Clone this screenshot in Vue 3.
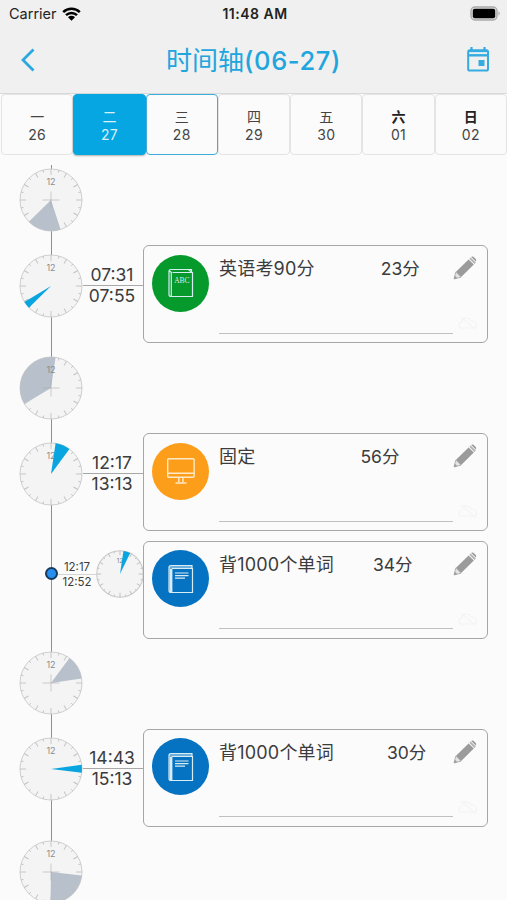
<script setup>
import { ref } from "vue";

const selectedDay = ref("27");
const today = "28";

const days = ref([
  { name: "一", date: "26" },
  { name: "二", date: "27" },
  { name: "三", date: "28" },
  { name: "四", date: "29" },
  { name: "五", date: "30" },
  { name: "六", date: "01", weekend: true },
  { name: "日", date: "02", weekend: true },
]);

// from / to are degrees on a 12 hour dial, gap is the space before the minutes
const rows = ref([
  { id: 1, type: "free", from: 162, to: 225.5 },
  {
    id: 2,
    type: "task",
    start: "07:31",
    end: "07:55",
    from: 225.5,
    to: 239,
    title: "英语考90分",
    minutes: 23,
    icon: "abc",
    color: "#059a2b",
    gap: 66,
  },
  { id: 3, type: "free", from: 239, to: 368.5 },
  {
    id: 4,
    type: "task",
    start: "12:17",
    end: "13:13",
    from: 8.5,
    to: 36.5,
    title: "固定",
    minutes: 56,
    icon: "screen",
    color: "#fd9e1b",
    gap: 105,
  },
  {
    id: 5,
    type: "sub",
    start: "12:17",
    end: "12:52",
    from: 8.5,
    to: 26,
    title: "背1000个单词",
    minutes: 34,
    icon: "book",
    color: "#0573c2",
    gap: 39,
  },
  { id: 6, type: "free", from: 36.5, to: 81.5 },
  {
    id: 7,
    type: "task",
    start: "14:43",
    end: "15:13",
    from: 82,
    to: 97,
    title: "背1000个单词",
    minutes: 30,
    icon: "book",
    color: "#0573c2",
    gap: 53,
  },
  { id: 8, type: "free", from: 96.5, to: 181 },
]);

const point = (deg) => {
  const rad = (deg * Math.PI) / 180;
  return `${(31 * Math.sin(rad)).toFixed(2)} ${(-31 * Math.cos(rad)).toFixed(2)}`;
};

const sector = (row) => {
  const large = row.to - row.from > 180 ? 1 : 0;
  return `M0 0L${point(row.from)}A31 31 0 ${large} 1 ${point(row.to)}Z`;
};

const tickLength = (n) => (n % 6 === 0 ? 6 : n % 2 === 0 ? 5 : 2.5);
</script>

<template>
  <div class="page">
    <div class="status-bar">
      <div class="carrier">
        <span>Carrier</span>
        <svg width="19" height="14" viewBox="0 0 19 14">
          <path
            d="M1.2 5.2A12 12 0 0 1 17.8 5.2M4 8.2A8 8 0 0 1 15 8.2"
            fill="none"
            stroke="#000"
            stroke-width="2.5"
          />
          <path d="M6 10.3A5 5 0 0 1 13 10.3L9.5 13.8Z" fill="#000" />
        </svg>
      </div>
      <div class="clock-text">11:48 AM</div>
      <div class="battery">
        <svg width="31" height="16" viewBox="0 0 31 16">
          <rect x="1" y="1" width="26" height="13" rx="4" fill="#dcdcdc" stroke="#a9a9a9" stroke-width="1.4" />
          <rect x="2.8" y="2.8" width="22.4" height="9.4" rx="2" fill="#000" />
          <path d="M28.5 5.3Q31 7.5 28.5 9.7Z" fill="#a9a9a9" />
        </svg>
      </div>
    </div>

    <div class="nav-bar">
      <svg class="back" width="16" height="24" viewBox="0 0 16 24">
        <path d="M13.5 1.5L3 12L13.5 22.5" fill="none" stroke="#2ba8de" stroke-width="2.8" />
      </svg>
      <h1>时间轴<span>(06-27)</span></h1>
      <svg class="calendar" width="24" height="26" viewBox="0 0 24 26">
        <path d="M5.5 0V4M18.5 0V4" stroke="#35abdf" stroke-width="2.2" />
        <rect x="2.2" y="3.2" width="19.8" height="20.3" rx="1.6" fill="none" stroke="#35abdf" stroke-width="2" />
        <path d="M2 3H22V9.5H2Z" fill="#35abdf" />
        <path d="M3.2 6.1H21" stroke="#e3f0f5" stroke-width="2" />
        <rect x="12.5" y="13" width="6" height="6" fill="#35abdf" />
      </svg>
    </div>

    <div class="week">
      <button
        v-for="day in days"
        :key="day.date"
        class="day"
        :class="{
          active: selectedDay === day.date,
          today: today === day.date,
          weekend: day.weekend,
        }"
        @click="selectedDay = day.date"
      >
        <span class="day-name">{{ day.name }}</span>
        <span class="day-date">{{ day.date }}</span>
      </button>
    </div>

    <div class="timeline">
      <div v-for="row in rows" :key="row.id" class="row" :class="row.type">
        <div v-if="row.type === 'sub'" class="dot"></div>
        <svg v-else class="dial" viewBox="-32 -32 64 64">
          <circle r="31" fill="#f4f4f4" stroke="#cfcfcf" />
          <path v-if="row.type === 'free'" :d="sector(row)" fill="#b7c0cb" />
          <line
            v-for="n in 24"
            :key="n"
            y1="-31"
            :y2="-31 + tickLength(n)"
            :transform="`rotate(${n * 15})`"
            stroke="#c2c2c2"
            stroke-width="0.9"
          />
          <path v-if="row.type === 'free'" d="M-8.5 0H8.5M0 -8.5V8.5" stroke="#aaa" stroke-opacity="0.55" />
          <text y="-15.3" text-anchor="middle">12</text>
          <path v-if="row.type !== 'free'" :d="sector(row)" fill="#08a5e1" />
        </svg>

        <div v-if="row.type !== 'free'" class="times">
          <span>{{ row.start }}</span>
          <span>{{ row.end }}</span>
        </div>

        <svg v-if="row.type === 'sub'" class="dial small" viewBox="-32 -32 64 64">
          <circle r="31" fill="#f4f4f4" stroke="#c8c8c8" stroke-width="1.4" />
          <line
            v-for="n in 24"
            :key="n"
            y1="-31"
            :y2="-31 + tickLength(n)"
            :transform="`rotate(${n * 15})`"
            stroke="#b9b9b9"
            stroke-width="1.1"
          />
          <text y="-15.3" text-anchor="middle">12</text>
          <path :d="sector(row)" fill="#08a5e1" />
        </svg>

        <div v-if="row.type !== 'free'" class="card">
          <div class="badge" :style="{ backgroundColor: row.color }">
            <svg
              v-if="row.icon === 'screen'"
              width="30"
              height="28"
              viewBox="0 0 30 28"
              fill="none"
              stroke="#ffe9c9"
              stroke-width="1.4"
            >
              <rect x="1.7" y="1.7" width="26.4" height="18.6" rx="1" />
              <path d="M2 16.3H28M12.8 20.5V25M17 20.5V25M9.5 26H20.5" />
            </svg>
            <svg v-else width="26" height="30" viewBox="0 0 26 30" fill="none" stroke="#d8ecf4" stroke-width="1.2">
              <path
                v-if="row.icon === 'abc'"
                d="M4.5 4.5H24.5V28.5H3Q1 28.5 1 26.5V3Q1 1.5 3 1.5H23.5V4.5M3.3 4V28M1.5 3L3.5 4.5M20.5 1.5L24 4.5"
              />
              <g v-else>
                <path d="M4 4.5H24.5V28.5H3Q1 28.5 1 26.5V3Q1 1.5 3 1.5H24V4.5M1.5 3H24" />
                <path d="M3 4.5V28" stroke-width="2.8" />
                <path d="M7 9H20.5M7 11.6H20.5M7 14.2H17" />
              </g>
              <text v-if="row.icon === 'abc'" x="13.9" y="14.7" text-anchor="middle">ABC</text>
            </svg>
          </div>
          <div class="content">
            <div class="title-line">
              <span>{{ row.title }}</span>
              <span class="minutes" :style="{ marginLeft: row.gap + 'px' }">{{ row.minutes }}分</span>
            </div>
          </div>
          <div class="actions">
            <svg width="24" height="24" viewBox="0 0 24 24">
              <path d="M1 23L2.8 16L8 21.2Z" fill="#e4e4e4" stroke="#a5a5a5" stroke-width="0.8" />
              <path d="M1 23L1.9 19.8L4.2 22.1Z" fill="#999" />
              <path d="M3 15.8L15.6 3.4L20.8 8.6L8.2 21Z" fill="#9b9b9b" />
              <path d="M16.3 2.8L17.6 1.5L22.8 6.6L21.4 8Z" fill="#b3b3b3" />
              <path d="M18.2 1L19 0.6Q20 0.2 21 1.2L22.7 2.9Q23.7 4 23 5.1L22.8 5.6Z" fill="#9b9b9b" />
            </svg>
            <svg class="cloud" width="20" height="16" viewBox="0 0 20 16" fill="none" stroke="#f4f4f4" stroke-width="1.2">
              <path d="M4 13Q1 13 1 10T4 7Q5 2 9 3Q12 3 13 6Q18 6 18.5 10Q18.5 13 15.5 13ZM3 2L18 15" />
            </svg>
          </div>
        </div>
      </div>
    </div>
  </div>
</template>

<style>
body {
  margin: 0;
  overflow: hidden;
}
</style>

<style scoped>
.page {
  width: 507px;
  height: 900px;
  overflow: hidden;
  background: #fbfbfb;
  color: #3c3c3c;
  font-family: Inter, "Noto Sans CJK SC", sans-serif;
}

.status-bar {
  display: grid;
  grid-template-columns: 1fr auto 1fr;
  align-items: center;
  height: 27px;
  padding: 0 6px 0 9px;
  background: #f0f0f0;
  color: #222;
  font-size: 14.5px;
}

.carrier {
  display: flex;
  align-items: center;
  gap: 5px;
}

.clock-text {
  font-weight: 600;
  font-size: 14px;
  letter-spacing: 0.5px;
}

.battery {
  display: flex;
  justify-content: flex-end;
}

.nav-bar {
  display: flex;
  justify-content: space-between;
  align-items: center;
  box-sizing: border-box;
  height: 67px;
  padding: 0 17px 0 20px;
  border-bottom: 1px solid #d9d9d9;
  background: #f0f0f0;
}

.back {
  margin-bottom: 1px;
}

h1 {
  margin: 1px 0 0 5px;
  color: #21a5dd;
  font-size: 26px;
  font-weight: 400;
  line-height: 36px;
}

h1 span {
  font-weight: 500;
  font-size: 25.5px;
  letter-spacing: 0.6px;
}

.calendar {
  margin-bottom: 1px;
}

.week {
  display: flex;
  height: 61px;
  padding-left: 1px;
}

.day {
  flex: 1;
  display: flex;
  flex-direction: column;
  align-items: center;
  justify-content: center;
  padding: 2px 0 0;
  border: 1.5px solid #e4e4e4;
  border-radius: 4px;
  background: #fbfbfb;
  color: #444;
  font-family: inherit;
  font-size: 14px;
  line-height: 18px;
}

.day-date {
  letter-spacing: 0.3px;
}

.day.active {
  border-color: #06a6e2;
  background: #06a6e2;
  color: #d9f1fb;
  box-shadow: 0 1px 2px rgba(0, 0, 0, 0.3);
}

.day.today {
  border-color: #3fabd8;
}

.day.weekend .day-name {
  font-weight: 700;
  color: #222;
}

.timeline {
  margin-top: 9.5px;
  background: linear-gradient(#909090, #909090) 51px 0 / 1px 100% no-repeat;
}

.row {
  display: flex;
  align-items: flex-start;
  height: 107.6px;
  padding-left: 19px;
}

.row.free {
  height: 80.5px;
}

.dial {
  flex: none;
  width: 64px;
  height: 64px;
  margin-top: 8.5px;
}

.free .dial {
  margin-top: 3.2px;
}

.dial.small {
  width: 48px;
  height: 48px;
  margin-top: 9px;
}

.dial text {
  fill: #8b8b8b;
  font-size: 9px;
}

.times {
  display: flex;
  flex-direction: column;
  width: 60px;
  margin-top: 19.5px;
  text-align: center;
  text-indent: -2px;
  font-size: 17.5px;
  line-height: 20px;
}

.times span:first-child {
  border-bottom: 1px solid #a8a8a8;
}

.dot {
  box-sizing: border-box;
  flex: none;
  width: 13px;
  height: 13px;
  margin: 26px 0 0 26px;
  border: 2px solid #173a5c;
  border-radius: 50%;
  background: #2590ef;
}

.sub .times {
  width: 38px;
  margin-top: 19px;
  text-indent: 0;
  font-size: 11.5px;
  line-height: 14px;
}

.sub .times span:first-child {
  border-color: #d4d4d4;
}

.card {
  display: flex;
  box-sizing: border-box;
  flex: none;
  width: 345px;
  height: 98px;
  border: 1.5px solid #a6a6a6;
  border-radius: 6px;
  background: #fbfbfb;
}

.sub .card {
  margin-left: -1px;
}

.badge {
  display: flex;
  flex: none;
  align-items: center;
  justify-content: center;
  width: 57px;
  height: 57px;
  margin: 8.5px 10px 0 8px;
  border-radius: 50%;
}

.badge text {
  fill: #d8ecf4;
  stroke: none;
  font-family: "Liberation Serif", serif;
  font-size: 7.5px;
}

.content {
  box-sizing: border-box;
  flex: none;
  width: 234px;
  height: 87.5px;
  padding-top: 10px;
  border-bottom: 1.5px solid #c0c0c0;
}

.title-line {
  display: flex;
  font-size: 18px;
  line-height: 26px;
  letter-spacing: 0.2px;
  white-space: nowrap;
}

.minutes {
  font-size: 17.5px;
  letter-spacing: 0;
}

.actions {
  display: flex;
  flex-direction: column;
  justify-content: space-between;
  align-items: flex-start;
  height: 75px;
  padding-top: 10px;
}

.cloud {
  margin-left: 5px;
}
</style>
